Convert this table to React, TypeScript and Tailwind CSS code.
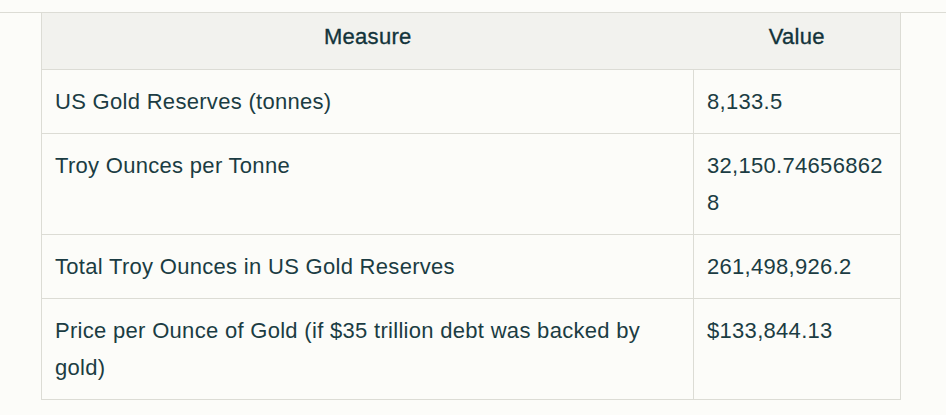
const rows = [
  ['US Gold Reserves (tonnes)', '8,133.5'],
  ['Troy Ounces per Tonne', '32,150.746568628'],
  ['Total Troy Ounces in US Gold Reserves', '261,498,926.2'],
  ['Price per Ounce of Gold (if $35 trillion debt was backed by gold)', '$133,844.13'],
];

export default function App() {
  return (
    <div className="min-h-screen bg-[#fcfcf9] pt-[12px] font-['Liberation_Sans',Arial,sans-serif] text-[#13343b]">
      <div className="border-t border-[#dcdcd5]">
        <table className="ml-[41px] w-[860px] table-fixed border-collapse">
          <colgroup>
            <col className="w-[652px]" />
            <col />
          </colgroup>
          <thead>
            <tr className="bg-[#f2f2ee]">
              <th className="h-[56px] border-l border-[#dcdcd5] px-[13px] pt-[5px] text-center align-top text-[22px] font-normal leading-[37px] tracking-[0.3px] [-webkit-text-stroke:0.35px_#13343b]">
                Measure
              </th>
              <th className="h-[56px] border-r border-[#dcdcd5] px-[13px] pt-[5px] text-center align-top text-[22px] font-normal leading-[37px] tracking-[0.3px] [-webkit-text-stroke:0.35px_#13343b]">
                Value
              </th>
            </tr>
          </thead>
          <tbody>
            {rows.map(([measure, value]) => (
              <tr key={measure}>
                <td className="border border-[#dcdcd5] px-[13px] py-[13px] align-top text-[22px] leading-[37px] tracking-[0.3px] text-[#1b3c43]">
                  {measure}
                </td>
                <td className="border border-[#dcdcd5] px-[13px] py-[13px] align-top text-[22px] leading-[37px] tracking-[0.3px] break-all text-[#1b3c43]">
                  {value}
                </td>
              </tr>
            ))}
          </tbody>
        </table>
      </div>
    </div>
  );
}
